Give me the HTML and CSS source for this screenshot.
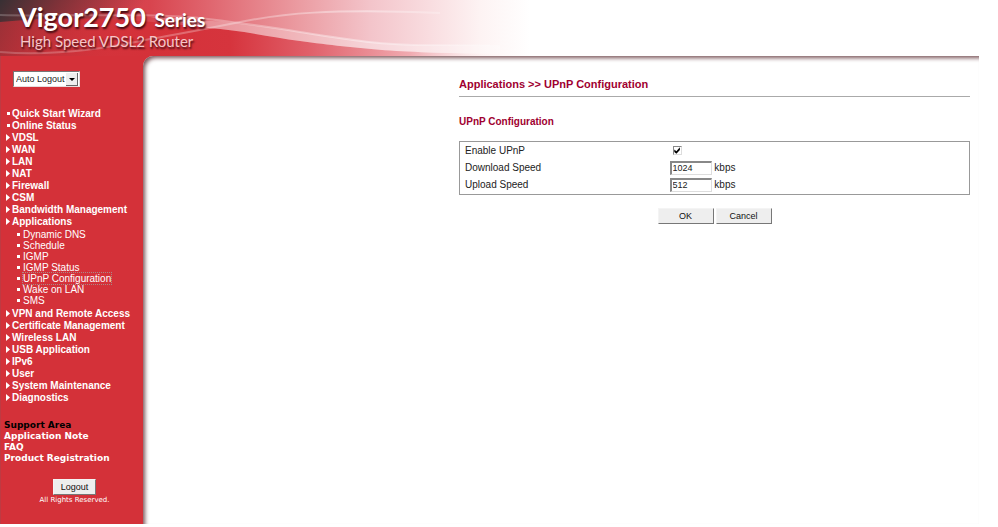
FILE: index.html
```html
<!DOCTYPE html>
<html lang="en">
<head>
  <meta charset="UTF-8">
  <meta name="viewport" content="width=device-width, initial-scale=1.0">
  <title>Vigor2750 Series</title>
  <link rel="stylesheet" href="styles.css">
</head>
<body>
  <header class="banner">
    <svg class="waves" viewBox="0 0 600 56" preserveAspectRatio="none" aria-hidden="true">
      <defs>
        <linearGradient id="fade" gradientUnits="userSpaceOnUse" x1="0" x2="500" y1="0" y2="0">
          <stop offset="0" stop-color="#d43139" stop-opacity=".6"/>
          <stop offset=".3" stop-color="#d43139"/>
          <stop offset=".46" stop-color="#d6343d"/>
          <stop offset=".62" stop-color="#e0606a"/>
          <stop offset=".82" stop-color="#f0aab0"/>
          <stop offset="1" stop-color="#fff" stop-opacity="0"/>
        </linearGradient>
        <linearGradient id="line" gradientUnits="userSpaceOnUse" x1="0" x2="490" y1="0" y2="0">
          <stop offset="0" stop-color="#fff" stop-opacity=".2"/>
          <stop offset=".5" stop-color="#fff" stop-opacity=".3"/>
          <stop offset=".75" stop-color="#fff" stop-opacity=".4"/>
          <stop offset="1" stop-color="#fff" stop-opacity=".1"/>
        </linearGradient>
      </defs>
      <path fill="url(#fade)" d="M0 22C70 15 140 19 208 28C240 30 270 37 300 41C360 49 400 53 500 54V56H0Z"/>
      <path fill="#fff" fill-opacity=".28" d="M150 17C210 19 260 26 300 32C350 40 380 45 430 45H500V54C400 53 360 49 300 41C270 37 240 30 208 28Q180 22 150 17Z"/>
      <path fill="none" stroke="url(#line)" stroke-width="2" d="M0 15C60 17 150 12 208 19C240 23 270 27 300 32C350 40 380 45 430 45H490"/>
      <path fill="none" stroke="url(#line)" stroke-width="2" d="M0 52C50 56 100 50 150 39C180 34 220 26 240 22C280 14 330 8 440 13"/>
    </svg>
    <h1 class="brand">Vigor2750 <small>Series</small></h1>
    <p class="tagline">High Speed VDSL2 Router</p>
  </header>

  <div class="frame">
    <aside class="sidebar">
      <span class="logout-mode">
        <select aria-label="Auto Logout">
          <option>Auto Logout</option>
        </select>
      </span>

      <nav>
        <ul class="menu">
          <li class="page"><a href="#">Quick Start Wizard</a></li>
          <li class="page"><a href="#">Online Status</a></li>
          <li><a href="#">VDSL</a></li>
          <li><a href="#">WAN</a></li>
          <li><a href="#">LAN</a></li>
          <li><a href="#">NAT</a></li>
          <li><a href="#">Firewall</a></li>
          <li><a href="#">CSM</a></li>
          <li><a href="#">Bandwidth Management</a></li>
          <li><a href="#">Applications</a>
            <ul class="submenu">
              <li class="page"><a href="#">Dynamic DNS</a></li>
              <li class="page"><a href="#">Schedule</a></li>
              <li class="page"><a href="#">IGMP</a></li>
              <li class="page"><a href="#">IGMP Status</a></li>
              <li class="page"><a class="current" href="#">UPnP Configuration</a></li>
              <li class="page"><a href="#">Wake on LAN</a></li>
              <li class="page"><a href="#">SMS</a></li>
            </ul>
          </li>
          <li><a href="#">VPN and Remote Access</a></li>
          <li><a href="#">Certificate Management</a></li>
          <li><a href="#">Wireless LAN</a></li>
          <li><a href="#">USB Application</a></li>
          <li><a href="#">IPv6</a></li>
          <li><a href="#">User</a></li>
          <li><a href="#">System Maintenance</a></li>
          <li><a href="#">Diagnostics</a></li>
        </ul>
      </nav>

      <div class="support">
        <h2>Support Area</h2>
        <a href="#">Application Note</a>
        <a href="#">FAQ</a>
        <a href="#">Product Registration</a>
      </div>

      <div class="leave">
        <button type="button">Logout</button>
        <p>All Rights Reserved.</p>
      </div>
    </aside>

    <main class="content">
      <h2 class="path">Applications &gt;&gt; UPnP Configuration</h2>
      <h3 class="section">UPnP Configuration</h3>
      <form>
        <table class="settings">
          <tr>
            <td class="name"><label for="enable">Enable UPnP</label></td>
            <td><input type="checkbox" id="enable" checked></td>
          </tr>
          <tr>
            <td class="name"><label for="download">Download Speed</label></td>
            <td><input type="text" id="download" value="1024"> kbps</td>
          </tr>
          <tr>
            <td class="name"><label for="upload">Upload Speed</label></td>
            <td><input type="text" id="upload" value="512"> kbps</td>
          </tr>
        </table>
        <div class="actions">
          <button type="submit">OK</button>
          <button type="reset">Cancel</button>
        </div>
      </form>
    </main>
  </div>
</body>
</html>
```

FILE: styles.css
```css
* {
  box-sizing: border-box;
}

body {
  margin: 0 19px 3px 0;
  background: #fff;
  color: #222;
  font: 10px/12px "Liberation Sans", Arial, sans-serif;
}

h1, h2, h3, p, ul {
  margin: 0;
  padding: 0;
}

ul {
  list-style: none;
}

/* banner */
.banner {
  position: relative;
  height: 56px;
  padding: 2px 0 0 18px;
  background:
    linear-gradient(125deg, #383034 0, #6b3036cc 50px, #d4313900 120px),
    linear-gradient(to right, #d0323b 0, #d8444e 150px, #e0666f 210px, #eb9ca2 300px, #f3c4ca 370px, #f9dde0 430px, #fdf3f3 480px, #fff 530px);
}

.waves {
  position: absolute;
  top: 0;
  left: 0;
  width: 600px;
  height: 56px;
}

.brand, .tagline {
  position: relative;
  font-family: Lato, sans-serif;
  color: #fff;
  text-shadow: 1px 2px 2px #400a10;
}

.brand {
  font-size: 27px;
  font-weight: 700;
  line-height: 30px;
}

.brand small {
  margin-left: 2px;
  font-size: 19px;
}

.tagline {
  padding-left: 2px;
  font-size: 15px;
  line-height: 12px;
  color: #f6c6c8;
}

.frame {
  display: flex;
  background: #d43139;
}

/* sidebar */
.sidebar {
  flex: none;
  width: 143px;
  padding: 15px 0 19px;
  border-left: 1px solid #bf3a42;
  color: #fff;
}

.sidebar a {
  color: #fff;
  text-decoration: none;
}

.logout-mode {
  display: block;
  position: relative;
  width: 67px;
  height: 16px;
  margin-left: 12px;
}

.logout-mode select {
  appearance: none;
  display: block;
  width: 100%;
  height: 100%;
  padding: 0 2px;
  border: 1px solid #e8dcdc;
  border-top-color: #777;
  border-left-color: #777;
  border-radius: 0;
  background: #fff;
  color: #222;
  font: 9px "Liberation Sans", Arial, sans-serif;
}

.logout-mode::before {
  content: "";
  position: absolute;
  top: 2px;
  right: 2px;
  width: 11px;
  height: 12px;
  border-right: 1px solid #666;
  border-bottom: 1px solid #666;
  background: #eee;
  pointer-events: none;
}

.logout-mode::after {
  content: "";
  position: absolute;
  top: 7px;
  right: 5px;
  border: 3px solid transparent;
  border-top-color: #000;
  border-bottom: 0;
  pointer-events: none;
}

.menu {
  margin-top: 21px;
  padding-left: 5px;
  font-weight: 700;
}

.menu li::before {
  content: "";
  display: inline-block;
  width: 4px;
  height: 7px;
  margin-right: 2px;
  background: #fff;
  clip-path: polygon(0 0, 100% 50%, 0 100%);
}

.menu .page::before {
  width: 3px;
  height: 3px;
  margin: 0 2px 2px 1px;
  clip-path: none;
}

.submenu {
  padding: 1px 0 2px 10px;
  font-weight: 400;
  line-height: 11px;
}

.submenu .page::before {
  margin-right: 3px;
}

.submenu .current {
  outline: 1px dotted #a88;
}

.support {
  margin-top: 15px;
  padding-left: 3px;
  font: 700 9px/11px Verdana, "DejaVu Sans", sans-serif;
}

.support h2 {
  font-size: 9px;
  line-height: 12px;
  color: #000;
}

.support a {
  display: block;
}

.leave {
  margin-top: 15px;
  padding-left: 5px;
  text-align: center;
}

.leave p {
  font: 7px/10px Verdana, "DejaVu Sans", sans-serif;
}

button {
  height: 16px;
  padding: 0;
  border: 1px solid #f4f4f4;
  border-right-color: #777;
  border-bottom-color: #777;
  background: #eee;
  color: #111;
  font: 9px "Liberation Sans", Arial, sans-serif;
}

.leave button {
  width: 43px;
}

/* content */
.content {
  flex: 1;
  padding: 22px 9px 0 316px;
  border-top-left-radius: 10px;
  background: #fff;
  box-shadow: inset 3px 3px 4px -1px #7a5458;
}

.path {
  padding-bottom: 5px;
  border-bottom: 1px solid #aaa;
  font-size: 11px;
  line-height: 13px;
  color: #a00030;
}

.section {
  margin: 19px 0 13px;
  font-size: 10px;
  color: #a00030;
}

.settings {
  width: 100%;
  padding: 0 5px 1px;
  border: 1px solid #999;
  border-spacing: 0;
}

.settings td {
  height: 17px;
  padding: 0;
}

.settings .name {
  width: 41%;
}

input {
  appearance: none;
  margin: 0;
  border: 1px solid #ddd;
  border-top: 2px solid #888;
  border-left: 2px solid #888;
  border-radius: 0;
  background: #fff;
  vertical-align: middle;
}

input[type="text"] {
  width: 42px;
  height: 14px;
  padding: 0 1px;
  color: #222;
  font: 9px "Liberation Sans", Arial, sans-serif;
}

input[type="checkbox"] {
  display: block;
  width: 9px;
  height: 9px;
  margin-left: 3px;
  border-width: 1px;
}

input[type="checkbox"]:checked::before {
  content: "";
  display: block;
  width: 7px;
  height: 7px;
  background: #000;
  clip-path: polygon(10% 35%, 40% 60%, 90% 5%, 90% 42%, 40% 98%, 10% 70%);
}

.actions {
  display: flex;
  justify-content: center;
  gap: 2px;
  margin-top: 13px;
}

.actions button {
  width: 56px;
}
```
